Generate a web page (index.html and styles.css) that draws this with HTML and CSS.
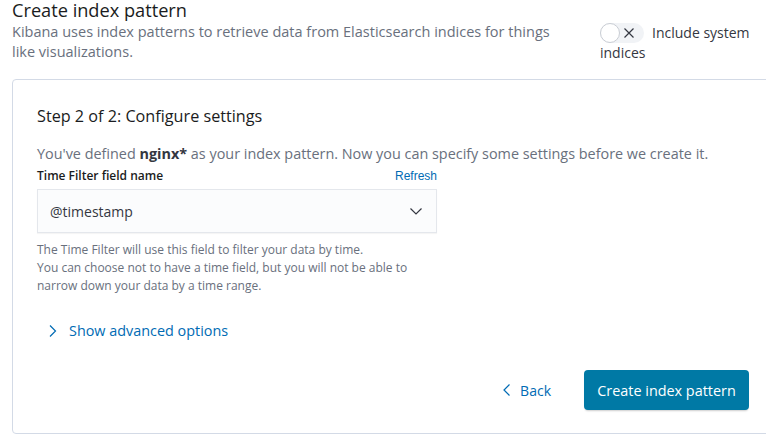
FILE: index.html
```html
<!DOCTYPE html>
<html>
<head>
<meta charset="utf-8">
<link rel="stylesheet" href="styles.css">
</head>
<body>
<div class="page">
  <header class="header">
    <div class="header-text">
      <h1 class="title">Create index pattern</h1>
      <p class="desc">Kibana uses index patterns to retrieve data from Elasticsearch indices for things like visualizations.</p>
    </div>
    <div class="system">
      <span class="switch"><span class="knob"></span><svg class="switch-x" width="12" height="12" viewBox="0 0 12 12"><path d="M1.5 1.5 L10.5 10.5 M10.5 1.5 L1.5 10.5" stroke="#343741" stroke-width="1.2" fill="none"/></svg></span><span class="system-label">Include system indices</span>
    </div>
  </header>

  <section class="panel">
    <h2 class="step">Step 2 of 2: Configure settings</h2>
    <p class="intro">You've defined <strong>nginx*</strong> as your index pattern. Now you can specify some settings before we create it.</p>

    <div class="field">
      <div class="field-head">
        <span class="label">Time Filter field name</span>
        <span class="refresh">Refresh</span>
      </div>
      <div class="select">
        <span>@timestamp</span>
        <svg width="16" height="16" viewBox="0 0 16 16"><path d="M2.5 5.5 L8 11 L13.5 5.5" stroke="#343741" stroke-width="1.2" fill="none"/></svg>
      </div>
      <p class="help">The Time Filter will use this field to filter your data by time.<br>You can choose not to have a time field, but you will not be able to narrow down your data by a time range.</p>
    </div>

    <div class="advanced">
      <svg width="12" height="14" viewBox="0 0 12 14"><path d="M3 1.5 L8.5 7 L3 12.5" stroke="#006bb4" stroke-width="1.2" fill="none"/></svg>
      <span>Show advanced options</span>
    </div>

    <div class="actions">
      <span class="back"><svg width="12" height="14" viewBox="0 0 12 14"><path d="M8.5 1.5 L3 7 L8.5 12.5" stroke="#006bb4" stroke-width="1.2" fill="none"/></svg>Back</span>
      <span class="primary">Create index pattern</span>
    </div>
  </section>
</div>
</body>
</html>
```

FILE: styles.css
```css
html, body {
  margin: 0;
  padding: 0;
  background: #fff;
  overflow: hidden;
}
body {
  font-family: "Open Sans", "Liberation Sans", sans-serif;
  color: #343741;
  width: 766px;
}
.page {
  width: 820px;
}
.header {
  display: flex;
  padding-left: 12px;
  height: 79px;
}
.header-text {
  width: 560px;
}
.title {
  margin: 0;
  font-size: 18.2px;
  line-height: 22px;
  font-weight: 500;
  color: #1a1c21;
  margin-top: -1px;
}
.desc {
  margin: 1px 0 0;
  font-size: 14.5px;
  line-height: 20px;
  color: #69707d;
}
.system {
  margin-left: 28px;
  width: 166px;
  padding-top: 23px;
  font-size: 14px;
  line-height: 20px;
  color: #343741;
}
.switch {
  display: inline-block;
  position: relative;
  width: 44px;
  height: 20px;
  border-radius: 10px;
  background: #f1f3f6;
  vertical-align: top;
  margin-right: 8px;
}
.knob {
  position: absolute;
  left: 0;
  top: 0;
  width: 18px;
  height: 18px;
  border-radius: 50%;
  background: #fff;
  border: 1px solid #c9cdd4;
}
.switch-x {
  position: absolute;
  left: 23px;
  top: 4px;
}
.panel {
  margin-left: 12px;
  border: 1px solid #d3dae6;
  border-radius: 4px;
  padding: 24px;
  height: 305px;
}
.step {
  margin: 0 0 16px;
  font-size: 16.2px;
  line-height: 24px;
  font-weight: 500;
  color: #1a1c21;
}
.intro {
  margin: 0 0 3px;
  font-size: 14.4px;
  line-height: 20px;
  color: #69707d;
}
.intro strong {
  color: #343741;
  font-weight: 700;
}
.field {
  width: 400px;
}
.field-head {
  display: flex;
  justify-content: space-between;
  align-items: baseline;
  margin-bottom: 4px;
}
.label {
  font-size: 12px;
  line-height: 18px;
  font-weight: 600;
  color: #1a1c21;
}
.refresh {
  font-family: "Liberation Sans", Arial, sans-serif;
  font-size: 12px;
  color: #006bb4;
}
.select {
  box-sizing: border-box;
  height: 44px;
  display: flex;
  align-items: center;
  justify-content: space-between;
  padding: 0 12px;
  background: #fbfcfd;
  border: 1px solid #e4e7ec;
  box-shadow: 0 1px 1px rgba(0,0,0,0.04);
  font-size: 14px;
  color: #343741;
}
.help {
  margin: 8px 0 0;
  font-size: 12px;
  line-height: 18px;
  color: #69707d;
}
.advanced {
  margin-top: 26px;
  display: flex;
  align-items: center;
  gap: 10px;
  padding-left: 10px;
  font-size: 14.4px;
  line-height: 20px;
  color: #006bb4;
}
.actions {
  margin-top: 29px;
  width: 712px;
  display: flex;
  justify-content: flex-end;
  align-items: center;
}
.back {
  display: flex;
  align-items: center;
  gap: 7px;
  font-size: 14px;
  color: #006bb4;
  margin-right: 33px;
}
.primary {
  display: flex;
  align-items: center;
  justify-content: center;
  width: 165px;
  height: 40px;
  background: #0079a5;
  border-radius: 4px;
  color: #fff;
  font-size: 14.4px;
  font-weight: 500;
  box-shadow: 0 2px 2px -1px rgba(0,0,0,0.2);
}
```
